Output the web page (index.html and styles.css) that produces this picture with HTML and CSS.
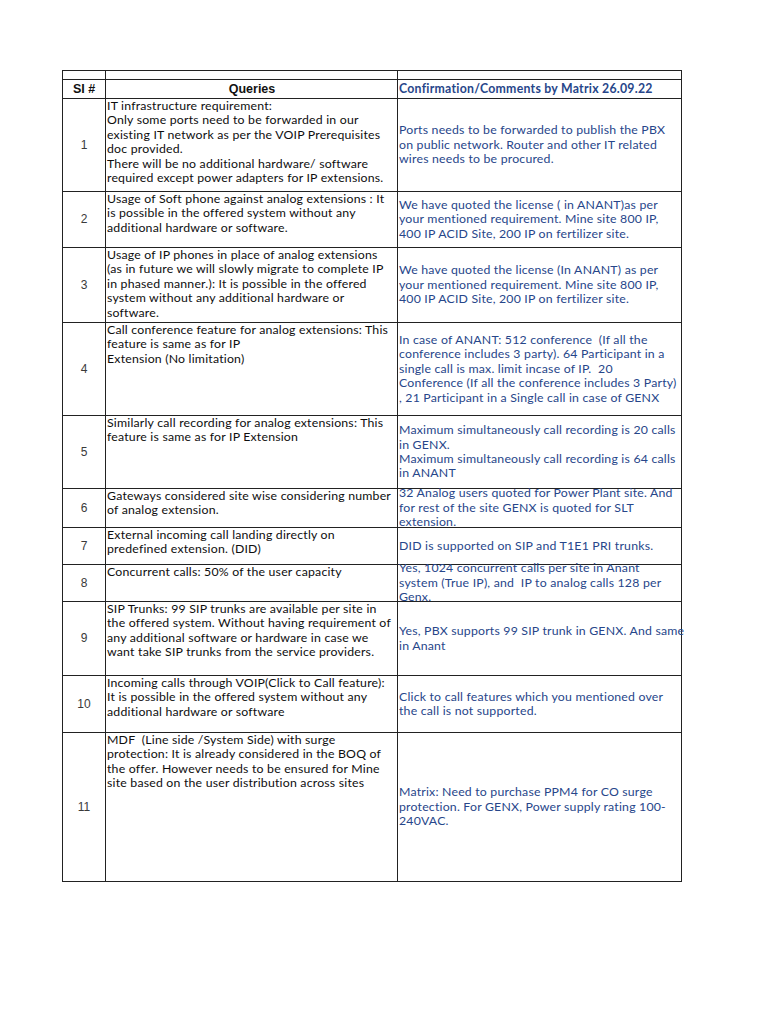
FILE: index.html
```html
<!DOCTYPE html>
<html lang="en">
<head>
<meta charset="utf-8">
<title>Queries and Confirmation</title>
<link rel="stylesheet" href="styles.css">
</head>
<body>
<div class="sheet">
  <div class="grid">
    <div class="cell"></div><div class="cell"></div><div class="cell"></div>

    <div class="cell num head">SI #</div>
    <div class="cell head center">Queries</div>
    <div class="cell ans head-blue">Confirmation/Comments by Matrix 26.09.22</div>

    <div class="cell num">1</div>
    <div class="cell q">IT infrastructure requirement:<br>Only some ports need to be forwarded in our<br>existing IT network as per the VOIP Prerequisites<br>doc provided.<br>There will be no additional hardware/ software<br>required except power adapters for IP extensions.</div>
    <div class="cell ans">Ports needs to be forwarded to publish the PBX<br>on public network. Router and other IT related<br>wires needs to be procured.</div>

    <div class="cell num">2</div>
    <div class="cell q">Usage of Soft phone against analog extensions : It<br>is possible in the offered system without any<br>additional hardware or software.</div>
    <div class="cell ans">We have quoted the license ( in ANANT)as per<br>your mentioned requirement. Mine site 800 IP,<br>400 IP ACID Site, 200 IP on fertilizer site.</div>

    <div class="cell num">3</div>
    <div class="cell q">Usage of IP phones in place of analog extensions<br>(as in future we will slowly migrate to complete IP<br>in phased manner.): It is possible in the offered<br>system without any additional hardware or<br>software.</div>
    <div class="cell ans">We have quoted the license (In ANANT) as per<br>your mentioned requirement. Mine site 800 IP,<br>400 IP ACID Site, 200 IP on fertilizer site.</div>

    <div class="cell num">4</div>
    <div class="cell q">Call conference feature for analog extensions: This<br>feature is same as for IP<br>Extension (No limitation)</div>
    <div class="cell ans">In case of ANANT: 512 conference&nbsp; (If all the<br>conference includes 3 party). 64 Participant in a<br>single call is max. limit incase of IP.&nbsp; 20<br>Conference (If all the conference includes 3 Party)<br>, 21 Participant in a Single call in case of GENX</div>

    <div class="cell num">5</div>
    <div class="cell q">Similarly call recording for analog extensions: This<br>feature is same as for IP Extension</div>
    <div class="cell ans">Maximum simultaneously call recording is 20 calls<br>in GENX.<br>Maximum simultaneously call recording is 64 calls<br>in ANANT</div>

    <div class="cell num">6</div>
    <div class="cell q">Gateways considered site wise considering number<br>of analog extension.</div>
    <div class="cell ans">32 Analog users quoted for Power Plant site. And<br>for rest of the site GENX is quoted for SLT<br>extension.</div>

    <div class="cell num">7</div>
    <div class="cell q">External incoming call landing directly on<br>predefined extension. (DID)</div>
    <div class="cell ans">DID is supported on SIP and T1E1 PRI trunks.</div>

    <div class="cell num">8</div>
    <div class="cell q">Concurrent calls: 50% of the user capacity</div>
    <div class="cell ans">Yes, 1024 concurrent calls per site in Anant<br>system (True IP), and&nbsp; IP to analog calls 128 per<br>Genx.</div>

    <div class="cell num">9</div>
    <div class="cell q">SIP Trunks: 99 SIP trunks are available per site in<br>the offered system. Without having requirement of<br>any additional software or hardware in case we<br>want take SIP trunks from the service providers.</div>
    <div class="cell ans">Yes, PBX supports 99 SIP trunk in GENX. And same<br>in Anant</div>

    <div class="cell num">10</div>
    <div class="cell q">Incoming calls through VOIP(Click to Call feature):<br>It is possible in the offered system without any<br>additional hardware or software</div>
    <div class="cell ans">Click to call features which you mentioned over<br>the call is not supported.</div>

    <div class="cell num">11</div>
    <div class="cell q">MDF&nbsp; (Line side /System Side) with surge<br>protection: It is already considered in the BOQ of<br>the offer. However needs to be ensured for Mine<br>site based on the user distribution across sites</div>
    <div class="cell ans">Matrix: Need to purchase PPM4 for CO surge<br>protection. For GENX, Power supply rating 100-<br>240VAC.</div>
  </div>
</div>
</body>
</html>
```

FILE: styles.css
```css
html, body {
  margin: 0;
  padding: 0;
  background: #ffffff;
}

.sheet {
  padding: 70px 0 0 62px;
}

.grid {
  display: grid;
  width: max-content;
  grid-template-columns: 43px 292px 284px;
  grid-template-rows: 9px 19px 93px 56px 75px 93px 73px 39px 37px 37px 74px 57px 149px;
  border-top: 1px solid #222;
  border-left: 1px solid #222;
}

.cell {
  box-sizing: border-box;
  border-right: 1px solid #222;
  border-bottom: 1px solid #222;
  font-family: Lato, "Liberation Sans", sans-serif;
  font-size: 12.3px;
  letter-spacing: 0.2px;
  line-height: 14.4px;
  color: #0e0e0e;
  padding: 0 0 0 1px;
  min-width: 0;
}

.num {
  display: flex;
  align-items: center;
  justify-content: center;
  padding: 0;
  font-family: "Liberation Sans", Arial, sans-serif;
  font-size: 12px;
  letter-spacing: 0;
  color: #3a3a3a;
}

.head {
  font-family: "Liberation Sans", Arial, sans-serif;
  font-weight: bold;
  font-size: 12.5px;
  letter-spacing: 0;
  color: #111;
}

.center {
  display: flex;
  align-items: center;
  justify-content: center;
}

.q {
  white-space: nowrap;
}

.ans {
  display: flex;
  align-items: center;
  color: #27468a;
  white-space: nowrap;
}

.head-blue {
  font-weight: bold;
  letter-spacing: 0.25px;
}
```
